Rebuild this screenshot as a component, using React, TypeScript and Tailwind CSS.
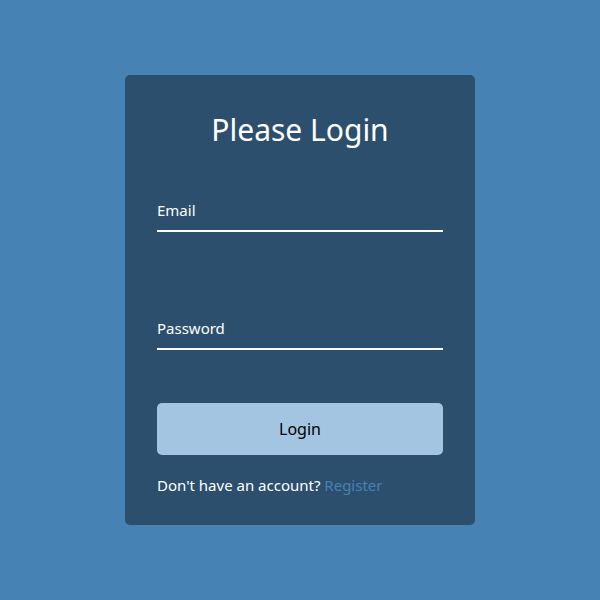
export default function App() {
  return (
    <div
      className="flex min-h-[600px] w-full items-center justify-center bg-[#4682b4]"
      style={{ fontFamily: '"Noto Sans", "Open Sans", sans-serif' }}
    >
      <form className="flex h-[450px] w-[350px] flex-col rounded-[5px] bg-[#2c4f6e] px-8 pt-[32px]">
        <h1 className="text-center text-[30px] leading-[45px] font-normal text-white">
          Please Login
        </h1>

        <div className="mt-[44px] flex h-[36px] items-center border-b-2 border-white">
          <span className="pb-[5px] text-[15px] text-white">Email</span>
        </div>

        <div className="mt-[82px] flex h-[36px] items-center border-b-2 border-white">
          <span className="pb-[5px] text-[15px] text-white">Password</span>
        </div>

        <button
          type="button"
          className="mt-[53px] h-[52px] w-full rounded-[5px] bg-[#a4c5e1] text-[16px] text-black"
        >
          Login
        </button>

        <p className="mt-[19px] text-[15px] leading-[22px] text-white">
          Don't have an account?{" "}
          <a className="text-[#4682b4]" href="#">
            Register
          </a>
        </p>
      </form>
    </div>
  );
}
